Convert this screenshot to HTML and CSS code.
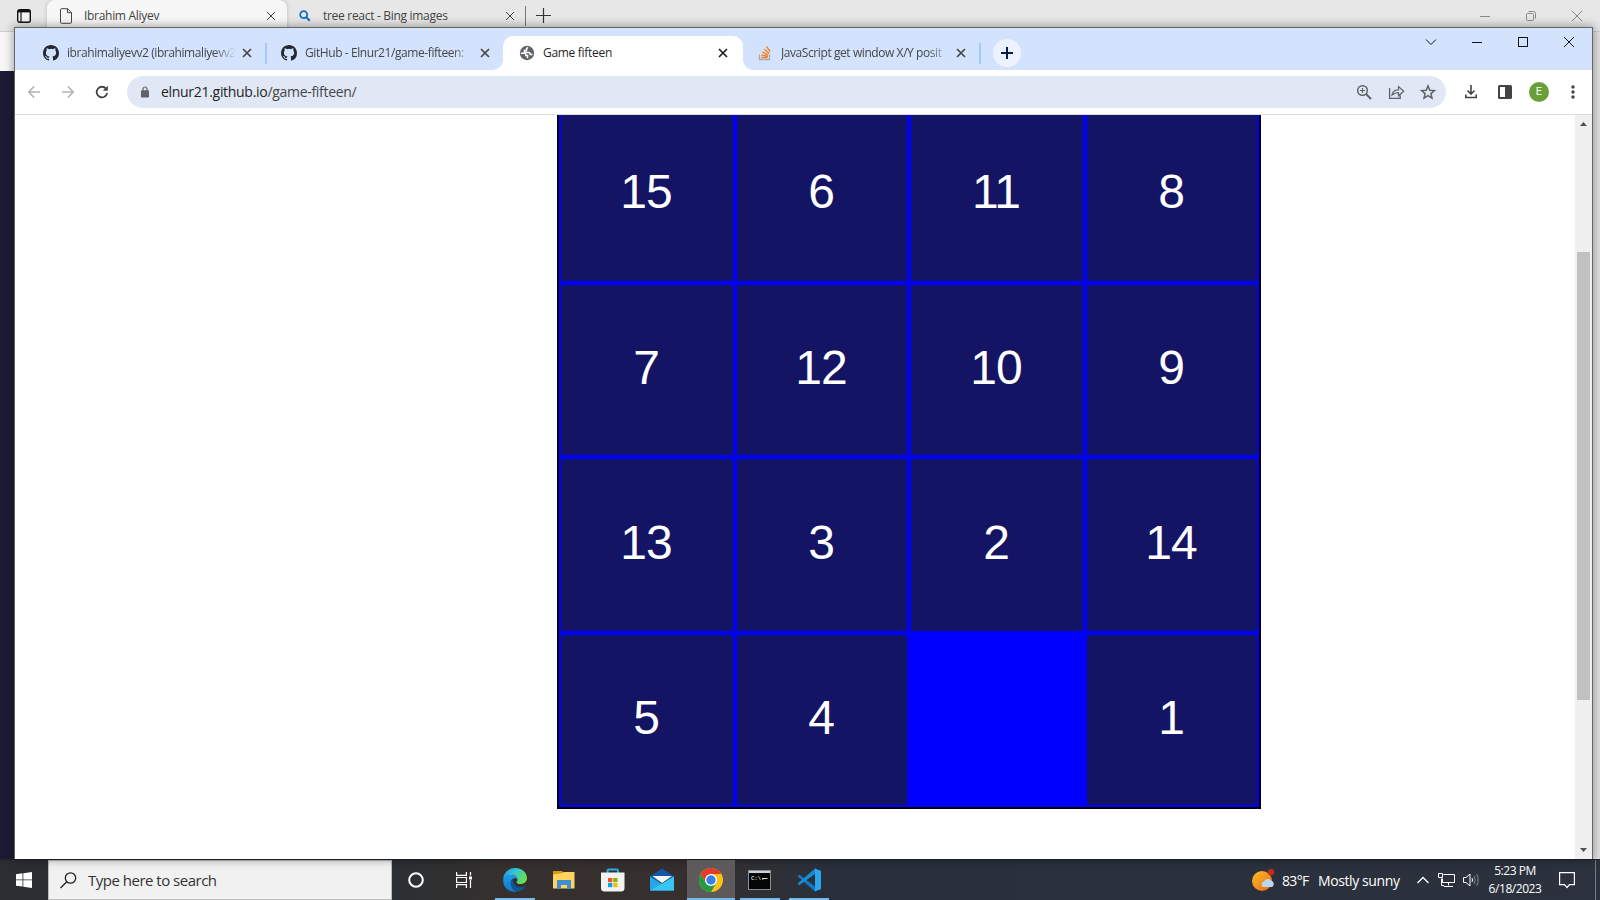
FILE: index.html
```html
<!DOCTYPE html>
<html lang="en">
<head>
<meta charset="utf-8">
<title>Game fifteen</title>
<link rel="stylesheet" href="styles.css">
</head>
<body>
<svg class="defs" width="0" height="0">
  <symbol id="github" viewBox="0 0 16 16"><path fill="#24292f" d="M8 0C3.58 0 0 3.58 0 8c0 3.54 2.29 6.53 5.47 7.59.4.07.55-.17.55-.38 0-.19-.01-.82-.01-1.49-2.01.37-2.53-.49-2.69-.94-.09-.23-.48-.94-.82-1.13-.28-.15-.68-.52-.01-.53.63-.01 1.08.58 1.23.82.72 1.21 1.87.87 2.33.66.07-.52.28-.87.51-1.07-1.78-.2-3.64-.89-3.64-3.95 0-.87.31-1.59.82-2.15-.08-.2-.36-1.02.08-2.12 0 0 .67-.21 2.2.82a7.6 7.6 0 0 1 4 0c1.53-1.04 2.2-.82 2.2-.82.44 1.1.16 1.92.08 2.12.51.56.82 1.27.82 2.15 0 3.07-1.87 3.75-3.65 3.95.29.25.54.73.54 1.48 0 1.07-.01 1.93-.01 2.2 0 .21.15.46.55.38A8 8 0 0 0 16 8c0-4.42-3.58-8-8-8z"/></symbol>
  <symbol id="close" viewBox="0 0 10 10"><path d="M1 1l8 8M9 1l-8 8" fill="none" stroke="currentColor"/></symbol>
</svg>
<div class="desktop">
  <div class="edge">
    <div class="edge-bar">
      <svg class="edge-menu" width="14" height="14" viewBox="0 0 14 14"><rect x=".7" y=".7" width="12.600" height="12.600" rx="2" fill="#f4f4f4" stroke="#111" stroke-width="1.400"/><path d="M1 2.200h12" stroke="#111" stroke-width="2.400"/><path d="M4 3v10" stroke="#111" stroke-width="1.200"/></svg>
      <div class="edge-tab edge-tab-on">
        <svg width="12" height="16" viewBox="0 0 12 16"><path d="M1.500.7h6l4 4v9.600a1 1 0 0 1-1 1h-9a1 1 0 0 1-1-1V1.700a1 1 0 0 1 1-1zM7.500.7v4h4" fill="none" stroke="#444"/></svg>
        <span class="edge-title">Ibrahim Aliyev</span>
        <svg class="edge-x" width="10" height="10"><use href="#close"/></svg>
      </div>
      <div class="edge-tab">
        <svg width="12" height="12" viewBox="0 0 12 12"><circle cx="4.700" cy="4.700" r="3.500" fill="none" stroke="#1573c4" stroke-width="1.800"/><path d="M7.300 7.300l3.500 3.500" stroke="#1573c4" stroke-width="2"/></svg>
        <span class="edge-title">tree react - Bing images</span>
        <svg class="edge-x" width="10" height="10"><use href="#close"/></svg>
      </div>
      <i class="edge-sep"></i>
      <svg class="edge-plus" width="15" height="15"><path d="M7.500 0v15M0 7.500h15" stroke="#333" stroke-width="1.200"/></svg>
      <svg class="edge-controls" width="104" height="12" viewBox="0 0 104 12" fill="none" stroke="#888"><path d="M1 6.500h10M93 1l10 10M103 1l-10 10"/><rect x="47.500" y="3.500" width="7" height="7" rx="1"/><path d="M49.500 1.500h5a2 2 0 0 1 2 2v5"/></svg>
    </div>
    <div class="edge-tools"></div>
    <div class="edge-page"></div>
  </div>

  <div class="chrome">
    <div class="tabs">
      <div class="tab tab-first">
        <svg width="16" height="16"><use href="#github"/></svg>
        <span class="tab-title fade">ibrahimaliyevv2 (ibrahimaliyevv2</span>
        <svg class="tab-x" width="10" height="10"><use href="#close"/></svg>
        <i class="tab-sep"></i>
      </div>
      <div class="tab">
        <svg width="16" height="16"><use href="#github"/></svg>
        <span class="tab-title fade">GitHub - Elnur21/game-fifteen:</span>
        <svg class="tab-x" width="10" height="10"><use href="#close"/></svg>
      </div>
      <div class="tab tab-on">
        <svg width="16" height="16" viewBox="0 0 16 16"><circle cx="8" cy="8" r="7.200" fill="#5f6368"/><path d="M8.800 2.200L7.500 4v1.500h-2v2h4.200c1.300 0 1.500.8 1.500 2h2.300M1.800 8.300h3.500c1.600 0 1.500 1 1.500 2.200h1.700v2.800" fill="none" stroke="#fff" stroke-width="1.500"/></svg>
        <span class="tab-title">Game fifteen</span>
        <svg class="tab-x" width="10" height="10"><use href="#close"/></svg>
      </div>
      <div class="tab">
        <svg width="16" height="16" viewBox="0 0 16 16" fill="none"><path d="M2.500 9.500v5h10v-5" stroke="#a7abb0" stroke-width="1.300"/><path d="M4.300 12.500h6.500M4.500 10l6.300 1.300M5.400 7.200l5.800 2.700M7.200 4.300l5 4.100M9.300 1.300l3.900 5.200" stroke="#f48024" stroke-width="1.400"/></svg>
        <span class="tab-title fade">JavaScript get window X/Y posit</span>
        <svg class="tab-x" width="10" height="10"><use href="#close"/></svg>
        <i class="tab-sep"></i>
      </div>
      <svg class="new-tab" width="28" height="28"><circle cx="14" cy="14" r="14" fill="#edf3fe"/><path d="M14 8v12M8 14h12" stroke="#041e49" stroke-width="2"/></svg>
      <svg class="win-controls" width="149" height="12" viewBox="0 0 149 12" fill="none" stroke="#111"><path d="M1 3.500l5 5 5-5M47 6.500h10M139 1l10 10M149 1l-10 10"/><rect x="93.500" y="1.500" width="9" height="9"/></svg>
    </div>
    <div class="toolbar">
      <svg class="nav" width="80" height="14" viewBox="0 0 80 14" fill="none" stroke-width="1.600"><path d="M12 7H1M6 1.500L.8 7 6 12.500M34 7h11M40 1.500L45.200 7 40 12.500" stroke="#b0b2b4"/><path d="M78 3.600A5.300 5.300 0 1 0 79.200 8" stroke="#444" stroke-width="1.800"/><path d="M79.800.8v5h-5z" fill="#444"/></svg>
      <div class="address">
        <svg width="8" height="12" viewBox="0 0 8 12"><path d="M2 5V3a2 2 0 0 1 4 0v2" fill="none" stroke="#5f6368" stroke-width="1.200"/><rect y="4.300" width="8" height="7.200" rx="1" fill="#5f6368"/></svg>
        <span class="url">elnur21.github.io<span class="path">/game-fifteen/</span></span>
        <svg class="address-icons" width="80" height="16" viewBox="0 0 80 16" fill="none" stroke="#5f6368" stroke-width="1.500"><circle cx="6.500" cy="6.500" r="4.800"/><path d="M10 10l5 5" stroke-width="2"/><path d="M6.500 4v5M4 6.500h5" stroke-width="1.200"/><path d="M33.600 4v10.300h10.600v-3" stroke-width="1.300"/><path d="M36 11c.5-3.500 3-5.200 6.500-5.200V2.500l5.200 4.700-5.200 4.600V8.600C40 8.600 38 9.300 36 11z" stroke-width="1.200"/><path d="M72 2l1.800 4.200 4.600.4-3.500 3 1.100 4.500-4-2.400-4 2.400 1.100-4.500-3.500-3 4.600-.4z"/></svg>
      </div>
      <svg class="download" width="12" height="14" viewBox="0 0 12 14" fill="none" stroke="#444" stroke-width="1.600"><path d="M6 0v8.500M2.500 5.500L6 9l3.500-3.500M.8 9.500v3h10.400v-3"/></svg>
      <svg class="panel" width="14" height="14"><rect width="14" height="14" rx="1.500" fill="#444"/><path d="M2 2h5v10H2z" fill="#fff"/></svg>
      <span class="avatar">E</span>
      <svg class="dots" width="4" height="14" fill="#444"><circle cx="2" cy="2" r="1.700"/><circle cx="2" cy="7" r="1.700"/><circle cx="2" cy="12" r="1.700"/></svg>
    </div>
    <div class="page">
      <div class="page-body">
        <div class="board">
          <b class="top">15</b><b class="top">6</b><b class="top">11</b><b class="top">8</b>
          <b>7</b><b>12</b><b>10</b><b>9</b>
          <b>13</b><b>3</b><b>2</b><b>14</b>
          <b>5</b><b>4</b><b class="blank"></b><b>1</b>
        </div>
      </div>
      <div class="scrollbar">
        <svg width="7" height="4"><path d="M0 4L3.500 0 7 4z" fill="#505050"/></svg>
        <i class="thumb"></i>
        <svg width="7" height="4"><path d="M0 0l3.500 4L7 0z" fill="#505050"/></svg>
      </div>
    </div>
  </div>

  <div class="taskbar">
    <div class="start"><svg width="16" height="16" fill="#fff"><path d="M0 2.200L6.500 1.300v6.200H0zM7.300 1.200L16 0v7.500H7.300zM0 8.300h6.500v6.300L0 13.700zM7.300 8.300H16V16l-8.700-1.200z"/></svg></div>
    <div class="search">
      <svg width="17" height="17" fill="none" stroke="#222" stroke-width="1.300"><circle cx="10.500" cy="6" r="5.200"/><path d="M6.800 9.700L.5 16"/></svg>
      <span class="search-text">Type here to search</span>
    </div>
    <div class="apps">
      <div class="app"><svg width="16" height="16"><circle cx="8" cy="8" r="6.800" fill="none" stroke="#fff" stroke-width="2"/></svg></div>
      <div class="app"><svg width="16" height="16" fill="none" stroke="#fff" stroke-width="1.200"><path d="M.6 0v3.400h9.800V0M.6 16v-3.400h9.800V16M.6 5.500h9.800v5H.6zM14.500 0v3.500M14.500 8v8"/><path d="M13 4.500h3v3h-3z" fill="#fff" stroke="none"/></svg></div>
      <div class="app run app-edge"><svg width="24" height="24" viewBox="0 0 24 24"><defs><linearGradient id="eg" x1="0" y1="0" x2="1" y2=".4"><stop offset="0" stop-color="#1693d8"/><stop offset=".5" stop-color="#35c5dd"/><stop offset="1" stop-color="#65de50"/></linearGradient><linearGradient id="eb" x1="0" y1="0" x2="0" y2="1"><stop offset="0" stop-color="#1d9ce6"/><stop offset="1" stop-color="#1178c8"/></linearGradient></defs><path d="M.3 10.500C1 4 6 0 12 0c7 0 12 4.700 12 10 0 3.500-2.800 6-6.200 6-3 0-4.300-1-4.300-1.800 0-.5 1-1.200 1-2.700 0-2.500-2.600-4.500-6-4.500C4.500 7 1.500 8.500.3 10.500z" fill="url(#eg)"/><path d="M.3 10.500C1.600 8 5 6.800 8.500 7c3.700.2 6 2.300 6 4.300-.8-1-2.300-1.300-3.500-1-2.300.6-3.500 3-3.200 5.700.3 3.500 3 6.500 6.200 7.800C6.500 25-.7 19.500.3 10.500z" fill="url(#eb)"/><path d="M9.500 11.200c-2.500 2-2 5.500-.3 8.300 1.300 2.200 3 3.600 4.800 4.300 3.800-.5 6.500-2.300 8.400-5 .3-.5 0-.8-.5-.5-5 2.700-11.400-.1-11.700-4.800-.1-1 0-1.600-.7-2.300z" fill="#11559c"/></svg></div>
      <div class="app"><svg width="22" height="18"><path d="M0 0h9l1.500 2V5H0z" fill="#d99a08"/><path d="M0 3.500L9 2l2-1h10.500v16.500H0z" fill="#ffd35e"/><path d="M4 9h14v9h-4v-4H8v4H4z" fill="#3f8fd0"/></svg></div>
      <div class="app"><svg width="24" height="24"><path d="M6.500 6V2.800Q6.500 1.500 8 1.500h7.500q1.500 0 1.500 1.300V6" fill="none" stroke="#20b0e8" stroke-width="2"/><path d="M0 4.500h23.500V20q0 3.500-3.500 3.500H3.500Q0 23.500 0 20z" fill="#f2f2f2"/><path d="M7 10h4.300v4.200H7z" fill="#f25022"/><path d="M12.200 10h4.300v4.200h-4.300z" fill="#7fba00"/><path d="M7 15h4.300v4.200H7z" fill="#00a4ef"/><path d="M12.200 15h4.300v4.200h-4.300z" fill="#ffb900"/></svg></div>
      <div class="app"><svg width="24" height="24"><path d="M0 8.500L12 .5l12 8V13H0z" fill="#1159a7"/><path d="M0 8.500l12 7.500 12-7.500v14H0z" fill="#24a6e7"/><path d="M2.500 8H22l-10 7z" fill="#f5f5f5"/><path d="M0 22.500L24 8.500v14z" fill="#39c5f4"/></svg></div>
      <div class="app run app-on"><svg width="24" height="24"><circle cx="12" cy="12" r="12" fill="#fbc116"/><path d="M12 6h10.400A12 12 0 0 0 1.600 6L6.800 15z" fill="#e33b2e"/><path d="M1.600 6A12 12 0 0 0 12 24l5.200-9L12 17.500 6.800 15z" fill="#249a41"/><circle cx="12" cy="12" r="6" fill="#fff"/><circle cx="12" cy="12" r="4.700" fill="#377fec"/></svg></div>
      <div class="app run"><svg class="cmd" width="23" height="20"><rect x=".5" y=".5" width="22" height="19" fill="#050505" stroke="#8b8f94"/><path d="M1 1h21v2H1z" fill="#cfd3d8"/><text x="3" y="10" class="cmd-text">C:\.</text><path d="M14 8.500h5.500" stroke="#ddd"/></svg></div>
      <div class="app run"><svg width="24" height="24"><path d="M18 .5L24 3v18l-6 2.500z" fill="#2aa5ee"/><path d="M.5 8.200L2.300 6.500 18 18.500v5z" fill="#0f79c3"/><path d="M.5 15.500l1.800 1.800L18 6V.5z" fill="#178bd3"/></svg></div>
    </div>
    <div class="tray">
      <svg class="weather" width="24" height="24"><defs><linearGradient id="sun" x1="0" y1="0" x2="1" y2="1"><stop offset="0" stop-color="#f8c12c"/><stop offset="1" stop-color="#ec6410"/></linearGradient></defs><circle cx="10" cy="13" r="10" fill="url(#sun)"/><path d="M11 19a3 3 0 0 1 1-5.500 4 4 0 0 1 7-1 3.500 3.500 0 0 1 1 6.500z" fill="#bcd5f7"/><circle cx="19" cy="4" r="3.200" fill="#c42b1c"/></svg>
      <span class="temp">83°F</span>
      <span class="sky">Mostly sunny</span>
      <svg class="up" width="12" height="8" fill="none" stroke="#fff" stroke-width="1.300"><path d="M.5 7L6 1.500 11.500 7"/></svg>
      <svg class="net" width="17" height="16" fill="none" stroke="#fff"><path d="M5.500 2.500h11v8h-12V6.500M10.500 10.500v3M6 14.500h9M3.500 6.500v7h2.500"/><path d="M.5 1.500h4v4h-4z"/></svg>
      <svg class="vol" width="17" height="14" fill="none" stroke="#fff"><path d="M.5 4.500H3l4-3.500v12L3 9.500H.5zM9 5q1 2 0 4"/><path d="M11 3q2.500 4 0 8M13.500 1q3.500 6 0 12" stroke="#858a91"/></svg>
      <div class="clock"><span>5:23 PM</span><span>6/18/2023</span></div>
      <svg class="note" width="16" height="17" fill="none" stroke="#fff" stroke-width="1.200"><path d="M.6.600h14.800v12H10.500L8 15.500l-2.500-2.900H.6z"/></svg>
      <i class="peek"></i>
    </div>
  </div>
</div>
</body>
</html>
```

FILE: styles.css
```css
* { box-sizing: border-box; }
body { margin: 0; font-family: "Open Sans", "Noto Sans", sans-serif; font-size: 12px; letter-spacing: -.3px; overflow: hidden; }
svg { display: block; flex: none; }
span { white-space: nowrap; }
.defs { position: absolute; }
.desktop { position: relative; width: 1600px; height: 900px; overflow: hidden; display: flex; flex-direction: column; }

.edge { height: 859px; flex: none; display: flex; flex-direction: column; background: #e2e2e2; }
.edge-bar { height: 32px; display: flex; align-items: center; background: #e7e7e7; color: #444; border-bottom: 1px solid #cfcfcf; }
.edge-menu { margin: 1px 16px 0 17px; }
.edge-tab { width: 238px; height: 32px; display: flex; align-items: center; padding: 0 10px 0 12px; }
.edge-tab-on { width: 240px; background: #f7f7f7; border-radius: 8px 8px 0 0; box-shadow: 0 0 4px #bbb; padding: 0 11px 0 13px; }
.edge-title { flex: 1; margin-left: 12px; }
.edge-x { margin-top: 1px; }
.edge-sep { width: 1px; height: 20px; background: #777; }
.edge-plus { margin-left: 10px; }
.edge-controls { margin: 0 17px 0 auto; }
.edge-tools { height: 39px; width: 14px; background: #f7f7f7; }
.edge-page { flex: 1; width: 14px; background: #1d1b33; }

.chrome { position: absolute; left: 14px; top: 27px; width: 1579px; height: 832px; border: 1px solid #666; border-bottom: 0; background: #fff; display: flex; flex-direction: column; box-shadow: 0 0 9px 1px rgba(0,0,0,.35); }
.tabs { height: 42px; flex: none; background: #d3e3fd; display: flex; color: #444746; }
.tab { position: relative; width: 238px; height: 34px; margin-top: 8px; padding: 0 18px 0 16px; display: flex; align-items: center; }
.tab-first { margin-left: 12px; }
.tab-on { width: 240px; margin: 8px -2px 0 0; background: #fff; border-radius: 10px 10px 0 0; color: #1f1f1f; }
.tab-on::before, .tab-on::after { content: ""; position: absolute; bottom: 0; width: 10px; height: 10px; }
.tab-on::before { left: -10px; background: radial-gradient(circle at 0 0, transparent 9.500px, #fff 10px); }
.tab-on::after { right: -10px; background: radial-gradient(circle at 100% 0, transparent 9.500px, #fff 10px); }
.tab-title { flex: none; width: 168px; margin: 0 7px 1px 8px; }
.fade { letter-spacing: -.42px; mask-image: linear-gradient(90deg, #000 147px, transparent 169px); }
.tab-x { stroke-width: 1.700; }
.tab-sep { position: absolute; right: -2px; top: 7px; width: 2px; height: 21px; background: #a8c7fa; }
.new-tab { margin: 11px 0 0 14px; }
.win-controls { margin: 8px 18px 0 auto; }

.toolbar { height: 45px; flex: none; display: flex; align-items: center; border-bottom: 1px solid #dedede; }
.nav { margin: 0 19px 0 13px; }
.address { width: 1319px; height: 32px; border-radius: 16px; background: #e1e8f5; display: flex; align-items: center; padding: 0 10px 0 14px; }
.url { font-size: 14px; color: #1f1f1f; margin: 0 0 1px 12px; letter-spacing: -.3px; }
.path { color: #474747; }
.address-icons { margin-left: auto; }
.download { margin-left: 19px; }
.panel { margin-left: 21px; }
.avatar { width: 20px; height: 20px; margin-left: 17px; border-radius: 50%; background: #689f38; color: #fff; font-size: 11px; line-height: 20px; text-align: center; letter-spacing: 0; font-family: Roboto, sans-serif; }
.dots { margin-left: 22px; }

.page { flex: 1; display: flex; min-height: 0; }
.page-body { flex: 1; padding-left: 542px; }
.board { width: 704px; height: 694px; background: #00f; border: 2px solid #000; border-top: 0; padding: 0 2px 2px; display: grid; grid-template-columns: 172px 170px 172px 170px; grid-template-rows: 166px 170px 172px 170px; gap: 4px; }
.board b { background: #141464; color: #fff; font: 48px "Liberation Sans", Arial, sans-serif; letter-spacing: -1px; display: flex; align-items: center; justify-content: center; padding: 0 2px 5px 0; }
.board .top { padding-bottom: 13px; }
.board .blank { background: #00f; }
.scrollbar { width: 17px; background: #f0f0f0; display: flex; flex-direction: column; align-items: center; padding: 7px 0; }
.thumb { width: 13px; height: 448px; margin: 126px 0 auto; background: #c1c1c1; }

.taskbar { height: 41px; flex: none; display: flex; border-top: 1px solid #20242b; background: linear-gradient(90deg, #2c2c33 0, #2b3034 390px, #35302e 500px, #352f2e 680px, #29303b 830px, #2b323d 1600px); color: #fff; }
.start { width: 48px; padding: 12px 16px; }
.search { width: 344px; height: 40px; background: #f1f1f1; border: 1px solid #bbb; display: flex; align-items: center; padding-left: 11px; color: #333; }
.search-text { font-size: 15px; letter-spacing: -.5px; margin-left: 11px; }
.apps { display: flex; gap: 1px; }
.app { width: 48px; height: 40px; display: flex; align-items: center; justify-content: center; position: relative; }
.app:first-child { margin-right: -1px; }
.app-edge { margin-left: 2px; }
.run::after { content: ""; position: absolute; left: 4px; right: 4px; bottom: 0; height: 2px; background: #76b9ed; }
.app-on { background: #5c5a5a; }
.app-on::after { left: 0; right: 0; }
.cmd { margin: 0 1px 1px 0; }
.cmd-text { font: 6px "Liberation Mono", monospace; fill: #fff; }
.tray { flex: 1; display: flex; align-items: center; }
.weather { margin-left: 419px; }
.temp, .sky { font-size: 14px; letter-spacing: -.65px; }
.temp { width: 36px; margin-left: 6px; }
.sky { width: 99px; letter-spacing: -.4px; }
.net { margin-left: 9px; }
.vol { margin-left: 8px; }
.clock { width: 70px; display: flex; flex-direction: column; align-items: center; line-height: 18px; margin-right: 9px; letter-spacing: -.45px; }
.note { margin-top: 1px; }
.peek { margin-left: auto; margin-right: 4px; width: 1px; height: 40px; background: #777c83; }
```
